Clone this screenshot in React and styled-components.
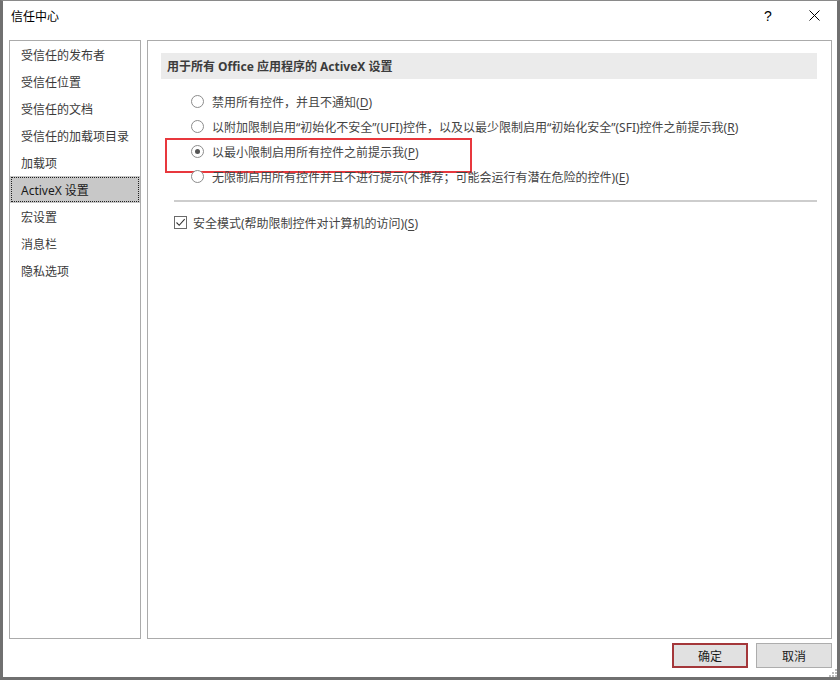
import styled, { createGlobalStyle, css } from "styled-components"

const GlobalStyle = createGlobalStyle`
    html, body {
        margin: 0;
        padding: 0;
        background: #ffffff;
    }
    body {
        font-family: "Noto Sans", "Noto Sans CJK SC", sans-serif;
        font-size: 12px;
        color: #262626;
    }
    * { box-sizing: border-box; }
`

const sideItems = [
    "受信任的发布者",
    "受信任位置",
    "受信任的文档",
    "受信任的加载项目录",
    "加载项",
    "ActiveX 设置",
    "宏设置",
    "消息栏",
    "隐私选项",
]

const options = [
    { text: "禁用所有控件，并且不通知", key: "D" },
    { text: "以附加限制启用“初始化不安全”(UFI)控件，以及以最少限制启用“初始化安全”(SFI)控件之前提示我", key: "R" },
    { text: "以最小限制启用所有控件之前提示我", key: "P", checked: true, marked: true },
    { text: "无限制启用所有控件并且不进行提示(不推荐；可能会运行有潜在危险的控件)", key: "E" },
]

// Window frame
const Window = styled.div`
    width: 840px;
    height: 680px;
    display: flex;
    flex-direction: column;
    border-top: 1px solid #8a8a8a;
    border-left: 3px solid #707070;
    border-right: 3px solid #707070;
    border-bottom: 3px solid #707070;
    background: #ffffff;
`

const TitleBar = styled.div`
    height: 29px;
    display: flex;
    align-items: center;
    flex-shrink: 0;
`

const Title = styled.div`
    flex: 1;
    padding-left: 8px;
    font-size: 12px;
    color: #000;
`

const CaptionButton = styled.div`
    width: 46px;
    height: 29px;
    display: flex;
    align-items: center;
    justify-content: center;
    font-family: "Liberation Sans", sans-serif;
    font-size: 14px;
    color: #000;
`

const Body = styled.div`
    flex: 1;
    display: flex;
    gap: 6px;
    padding: 10px 5px 0 6px;
`

const Sidebar = styled.div`
    width: 132px;
    height: 599px;
    border: 1px solid #ababab;
    display: flex;
    flex-direction: column;
`

const SideItem = styled.div`
    height: 27px;
    display: flex;
    align-items: center;
    padding-left: 11px;
    color: #3a3a3a;
    ${(p) => p.$active && css`
        background: #c8c8c8;
        outline: 1px dotted #202020;
        outline-offset: -2px;
        color: #1a1a1a;
    `}
`

const Main = styled.div`
    flex: 1;
    height: 599px;
    border: 1px solid #ababab;
    display: flex;
    flex-direction: column;
`

const SectionHeader = styled.div`
    margin: 12px 14px 0 13px;
    height: 26px;
    background: #ebebeb;
    display: flex;
    align-items: center;
    padding-left: 6px;
    font-weight: 700;
    color: #3c3c3c;
`

const RadioList = styled.div`
    margin: 10px 0 0 43px;
    display: flex;
    flex-direction: column;
`

const Option = styled.label`
    position: relative;
    height: 25px;
    display: flex;
    align-items: center;
    gap: 8px;
    color: #444;
    ${(p) => p.$marked && css`
        &::after {
            content: "";
            position: absolute;
            left: -26px;
            top: -1px;
            width: 303px;
            height: 31px;
            border: 2px solid #e8383d;
        }
    `}
`

const Radio = styled.span`
    width: 13px;
    height: 13px;
    border-radius: 50%;
    border: 1px solid #8c8c8c;
    background: #fff;
    display: flex;
    align-items: center;
    justify-content: center;
    flex-shrink: 0;
    &::before {
        content: "";
        width: 5px;
        height: 5px;
        border-radius: 50%;
        background: ${(p) => (p.$checked ? "#555" : "transparent")};
    }
`

const Key = styled.span`
    text-decoration: underline;
    text-underline-offset: 2px;
`

const Separator = styled.div`
    margin: 11px 14px 0 26px;
    height: 2px;
    background: #cdcdcd;
`

const CheckRow = styled.label`
    margin: 8px 0 0 26px;
    height: 25px;
    display: flex;
    align-items: center;
    gap: 6px;
    color: #444;
`

const CheckBox = styled.span`
    width: 13px;
    height: 13px;
    border: 1px solid #6a6a6a;
    display: flex;
    align-items: center;
    justify-content: center;
    flex-shrink: 0;
`

const Footer = styled.div`
    position: relative;
    height: 38px;
    display: flex;
    justify-content: flex-end;
    align-items: flex-start;
    gap: 8px;
    padding: 4px 5px 0 0;
    flex-shrink: 0;
`

const Button = styled.div`
    width: 76px;
    height: 25px;
    display: flex;
    align-items: center;
    justify-content: center;
    background: #e1e1e1;
    color: #1a1a1a;
    border: ${(p) => (p.$default ? "2px solid #a4373a" : "1px solid #adadad")};
`

const Grip = styled.svg`
    position: absolute;
    right: 0;
    bottom: 0;
`

const Mnemonic = ({ text, k }) => (
    <span>{text}(<Key>{k}</Key>)</span>
)

const App = () => {
    return (
        <>
            <GlobalStyle />
            <Window>
                <TitleBar>
                    <Title>信任中心</Title>
                    <CaptionButton>?</CaptionButton>
                    <CaptionButton>
                        <svg width="11" height="11" viewBox="0 0 11 11">
                            <path d="M0.5 0.5 L10.5 10.5 M10.5 0.5 L0.5 10.5" stroke="#000" strokeWidth="1" />
                        </svg>
                    </CaptionButton>
                </TitleBar>
                <Body>
                    <Sidebar>
                        {sideItems.map((item) => (
                            <SideItem key={item} $active={item === "ActiveX 设置"}>{item}</SideItem>
                        ))}
                    </Sidebar>
                    <Main>
                        <SectionHeader>用于所有 Office 应用程序的 ActiveX 设置</SectionHeader>
                        <RadioList>
                            {options.map((o) => (
                                <Option key={o.key} $marked={o.marked}>
                                    <Radio $checked={o.checked} />
                                    <Mnemonic text={o.text} k={o.key} />
                                </Option>
                            ))}
                        </RadioList>
                        <Separator />
                        <CheckRow>
                            <CheckBox>
                                <svg width="11" height="11" viewBox="0 0 11 11">
                                    <path d="M1.5 5.5 L4.2 8.3 L9.7 2.2" fill="none" stroke="#333" strokeWidth="1.1" />
                                </svg>
                            </CheckBox>
                            <Mnemonic text="安全模式(帮助限制控件对计算机的访问)" k="S" />
                        </CheckRow>
                    </Main>
                </Body>
                <Footer>
                    <Button $default>确定</Button>
                    <Button>取消</Button>
                    <Grip width="8" height="8" viewBox="0 0 8 8">
                        <rect x="6" y="0" width="2" height="2" fill="#bbb" />
                        <rect x="3" y="3" width="2" height="2" fill="#bbb" />
                        <rect x="6" y="3" width="2" height="2" fill="#bbb" />
                        <rect x="0" y="6" width="2" height="2" fill="#bbb" />
                        <rect x="3" y="6" width="2" height="2" fill="#bbb" />
                        <rect x="6" y="6" width="2" height="2" fill="#bbb" />
                    </Grip>
                </Footer>
            </Window>
        </>
    )
}

export default App
